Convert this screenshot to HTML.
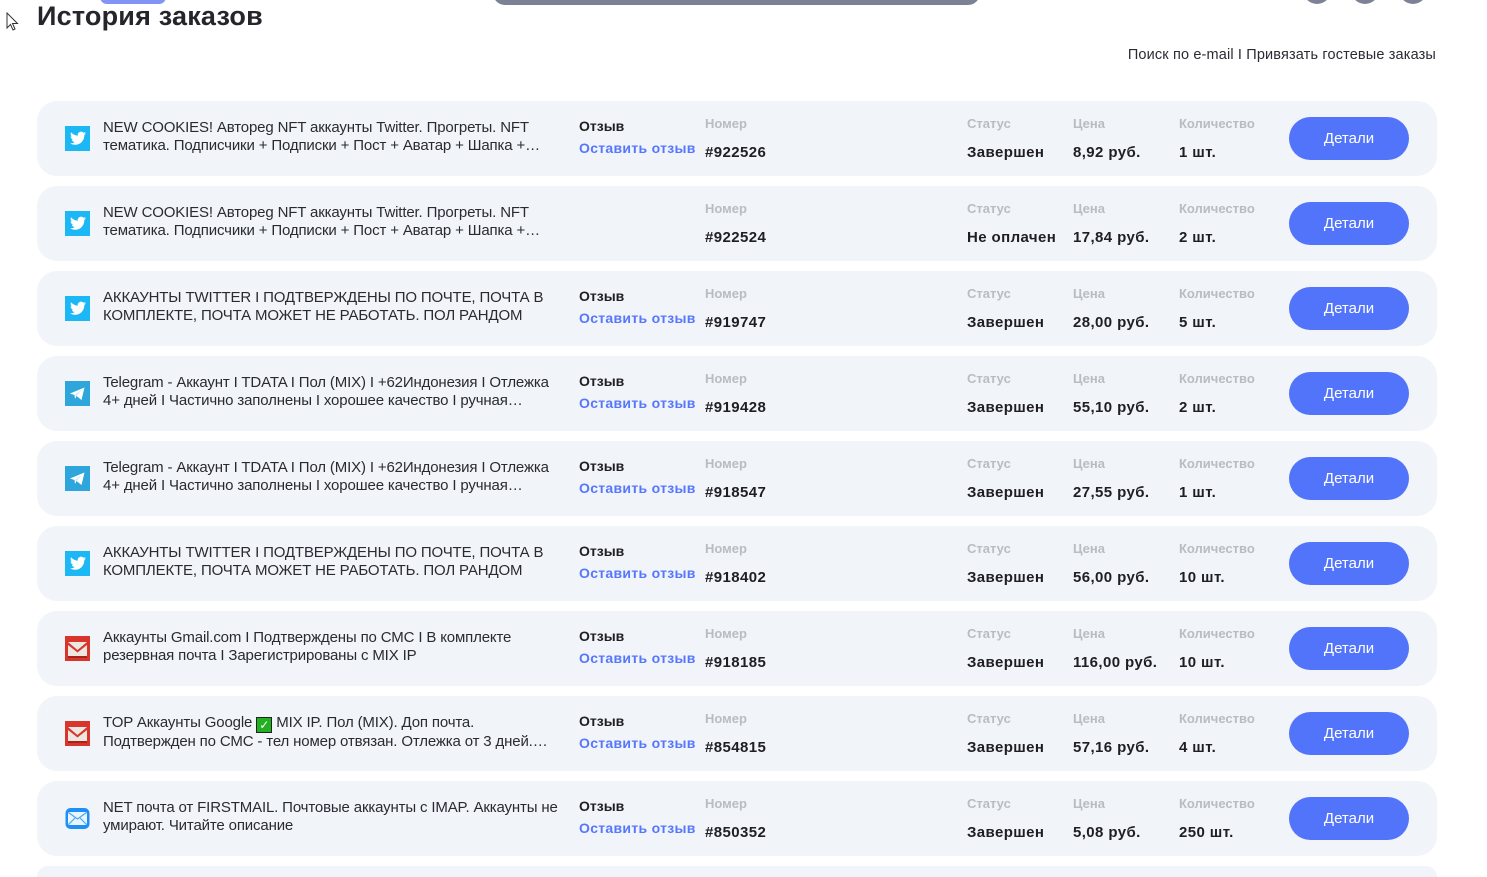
<!DOCTYPE html>
<html style="width:1487px;height:877px;overflow:hidden"><head><meta charset="utf-8">
<style>
*{margin:0;padding:0;box-sizing:border-box}
body{width:1487px;height:877px;overflow:hidden;background:#fff;font-family:"Liberation Sans","DejaVu Sans",sans-serif;color:#1e1e24;position:relative}
.abs{position:absolute}
h1{position:absolute;left:37px;top:0px;font-size:27px;font-weight:bold;color:#25252b;letter-spacing:0.2px;line-height:32px}
.links{position:absolute;right:51px;top:47px;font-size:14.5px;color:#2b2b33;letter-spacing:0.15px}
.row{position:absolute;left:37px;width:1400px;height:75px;background:#f1f4f9;border-radius:20px}
.ic{position:absolute;left:28px;top:25px;width:25px;height:25px}
.title{position:absolute;left:66px;top:18px;width:458px;font-size:15px;line-height:18px;color:#2a2a33;display:-webkit-box;-webkit-line-clamp:2;-webkit-box-orient:vertical;overflow:hidden;letter-spacing:-0.15px}
.ot{position:absolute;left:542px;top:17px;font-size:14px;font-weight:bold;color:#1e1e24}
.ot2{position:absolute;left:542px;top:39px;font-size:14px;font-weight:bold;color:#5677fc;letter-spacing:0.3px}
.lab{position:absolute;top:15px;font-size:13px;font-weight:bold;color:#b9bcc3}
.val{position:absolute;top:43px;font-size:15px;font-weight:bold;color:#1e1e24;letter-spacing:0.4px}
.btn{position:absolute;left:1252px;top:16px;width:120px;height:43px;border-radius:22px;background:#5274fb;color:#fff;font-size:15px;text-align:center;line-height:43px}
</style></head><body>
<div class="abs" style="left:100px;top:-10px;width:66px;height:14px;border-radius:8px;background:#8294f5"></div>
<div class="abs" style="left:493px;top:-20px;width:487px;height:25px;border-radius:12px;background:#7b8295"></div>
<div class="abs" style="left:1303px;top:-24px;width:28px;height:28px;border-radius:50%;background:#7b8295"></div>
<div class="abs" style="left:1351px;top:-24px;width:28px;height:28px;border-radius:50%;background:#7b8295"></div>
<div class="abs" style="left:1399px;top:-24px;width:28px;height:28px;border-radius:50%;background:#7b8295"></div>
<svg class="abs" style="left:6px;top:12px" width="14" height="20" viewBox="0 0 14 20"><path d="M1 1 L1 16 L4.5 12.5 L7 18 L9 17 L6.5 11.5 L11.5 11.5 Z" fill="#fff" stroke="#333" stroke-width="1"/></svg>
<h1>История заказов</h1>
<div class="links">Поиск по e-mail I Привязать гостевые заказы</div>

<svg width="0" height="0" style="position:absolute"><defs>
<symbol id="tw" viewBox="0 0 25 25"><rect width="25" height="25" fill="#1cb7f5"/><path d="M21 7.2c-.6.3-1.2.4-1.9.5.7-.4 1.2-1 1.4-1.8-.6.4-1.3.6-2.1.8a3.3 3.3 0 0 0-5.6 3C10.1 9.600 7.700 8.300 6.100 6.300c-.9 1.500-.4 3.400 1 4.400-.5 0-1-.2-1.500-.4 0 1.600 1.100 3 2.600 3.300-.5.100-1 .200-1.500.100.400 1.300 1.700 2.300 3.100 2.300A6.600 6.600 0 0 1 5 17.300c1.500.900 3.200 1.500 5 1.500 6.100 0 9.500-5.100 9.300-9.800.7-.5 1.200-1.100 1.700-1.800z" fill="#fff"/></symbol>
<symbol id="tg" viewBox="0 0 25 25"><rect width="25" height="25" fill="#2ea6dc"/><path d="M5 12.5 L19.5 6.5 L16.5 19 L11.5 15 L10 18 L9.5 14 Z" fill="#fff"/><path d="M9.5 14 L17 8.5 L11.5 15 Z" fill="#d3e9f5"/></symbol>
<symbol id="gm" viewBox="0 0 25 25"><rect width="25" height="25" fill="#d8362d"/><rect x="3" y="6" width="19" height="14" fill="#ece8e1"/><path d="M3 6 L12.5 14 L22 6 L22 9 L12.5 16.5 L3 9Z" fill="#d8362d"/><path d="M3 20 L22 20 L22 22 L3 22Z" fill="#a8221c"/></symbol>
<symbol id="em" viewBox="0 0 25 25"><rect x="0.5" y="2" width="24" height="21" rx="5" fill="#1e8ff5"/><rect x="3" y="6" width="19" height="13" rx="1.5" fill="#e9f5ff"/><path d="M3.5 6.5 L12.5 13 L21.5 6.5 M3.5 18.5 L10 12 M21.5 18.5 L15 12" stroke="#4aa8f5" stroke-width="1.2" fill="none"/></symbol>
</defs></svg>

<div class="row" style="top:101px"><svg class="ic"><use href="#tw"/></svg><div class="title">NEW COOKIES! Автореg NFT аккаунты Twitter. Прогреты. NFT тематика. Подписчики + Подписки + Пост + Аватар + Шапка + Описание</div><div class="ot">Отзыв</div><div class="ot2">Оставить отзыв</div><div class="lab" style="left:668px">Номер</div><div class="val" style="left:668px">#922526</div><div class="lab" style="left:930px">Статус</div><div class="val" style="left:930px">Завершен</div><div class="lab" style="left:1036px">Цена</div><div class="val" style="left:1036px">8,92 руб.</div><div class="lab" style="left:1142px">Количество</div><div class="val" style="left:1142px">1 шт.</div><div class="btn">Детали</div></div>

<div class="row" style="top:186px"><svg class="ic"><use href="#tw"/></svg><div class="title">NEW COOKIES! Автореg NFT аккаунты Twitter. Прогреты. NFT тематика. Подписчики + Подписки + Пост + Аватар + Шапка + Описание</div><div class="lab" style="left:668px">Номер</div><div class="val" style="left:668px">#922524</div><div class="lab" style="left:930px">Статус</div><div class="val" style="left:930px">Не оплачен</div><div class="lab" style="left:1036px">Цена</div><div class="val" style="left:1036px">17,84 руб.</div><div class="lab" style="left:1142px">Количество</div><div class="val" style="left:1142px">2 шт.</div><div class="btn">Детали</div></div>

<div class="row" style="top:271px"><svg class="ic"><use href="#tw"/></svg><div class="title">АККАУНТЫ TWITTER I ПОДТВЕРЖДЕНЫ ПО ПОЧТЕ, ПОЧТА В КОМПЛЕКТЕ, ПОЧТА МОЖЕТ НЕ РАБОТАТЬ. ПОЛ РАНДОМ</div><div class="ot">Отзыв</div><div class="ot2">Оставить отзыв</div><div class="lab" style="left:668px">Номер</div><div class="val" style="left:668px">#919747</div><div class="lab" style="left:930px">Статус</div><div class="val" style="left:930px">Завершен</div><div class="lab" style="left:1036px">Цена</div><div class="val" style="left:1036px">28,00 руб.</div><div class="lab" style="left:1142px">Количество</div><div class="val" style="left:1142px">5 шт.</div><div class="btn">Детали</div></div>

<div class="row" style="top:356px"><svg class="ic"><use href="#tg"/></svg><div class="title">Telegram - Аккаунт I TDATA I Пол (MIX) I +62Индонезия I Отлежка 4+ дней I Частично заполнены I хорошее качество I ручная регистрация</div><div class="ot">Отзыв</div><div class="ot2">Оставить отзыв</div><div class="lab" style="left:668px">Номер</div><div class="val" style="left:668px">#919428</div><div class="lab" style="left:930px">Статус</div><div class="val" style="left:930px">Завершен</div><div class="lab" style="left:1036px">Цена</div><div class="val" style="left:1036px">55,10 руб.</div><div class="lab" style="left:1142px">Количество</div><div class="val" style="left:1142px">2 шт.</div><div class="btn">Детали</div></div>

<div class="row" style="top:441px"><svg class="ic"><use href="#tg"/></svg><div class="title">Telegram - Аккаунт I TDATA I Пол (MIX) I +62Индонезия I Отлежка 4+ дней I Частично заполнены I хорошее качество I ручная регистрация</div><div class="ot">Отзыв</div><div class="ot2">Оставить отзыв</div><div class="lab" style="left:668px">Номер</div><div class="val" style="left:668px">#918547</div><div class="lab" style="left:930px">Статус</div><div class="val" style="left:930px">Завершен</div><div class="lab" style="left:1036px">Цена</div><div class="val" style="left:1036px">27,55 руб.</div><div class="lab" style="left:1142px">Количество</div><div class="val" style="left:1142px">1 шт.</div><div class="btn">Детали</div></div>

<div class="row" style="top:526px"><svg class="ic"><use href="#tw"/></svg><div class="title">АККАУНТЫ TWITTER I ПОДТВЕРЖДЕНЫ ПО ПОЧТЕ, ПОЧТА В КОМПЛЕКТЕ, ПОЧТА МОЖЕТ НЕ РАБОТАТЬ. ПОЛ РАНДОМ</div><div class="ot">Отзыв</div><div class="ot2">Оставить отзыв</div><div class="lab" style="left:668px">Номер</div><div class="val" style="left:668px">#918402</div><div class="lab" style="left:930px">Статус</div><div class="val" style="left:930px">Завершен</div><div class="lab" style="left:1036px">Цена</div><div class="val" style="left:1036px">56,00 руб.</div><div class="lab" style="left:1142px">Количество</div><div class="val" style="left:1142px">10 шт.</div><div class="btn">Детали</div></div>

<div class="row" style="top:611px"><svg class="ic"><use href="#gm"/></svg><div class="title">Аккаунты Gmail.com I Подтверждены по СМС I В комплекте резервная почта I Зарегистрированы с MIX IP</div><div class="ot">Отзыв</div><div class="ot2">Оставить отзыв</div><div class="lab" style="left:668px">Номер</div><div class="val" style="left:668px">#918185</div><div class="lab" style="left:930px">Статус</div><div class="val" style="left:930px">Завершен</div><div class="lab" style="left:1036px">Цена</div><div class="val" style="left:1036px">116,00 руб.</div><div class="lab" style="left:1142px">Количество</div><div class="val" style="left:1142px">10 шт.</div><div class="btn">Детали</div></div>

<div class="row" style="top:696px"><svg class="ic"><use href="#gm"/></svg><div class="title">TOP Аккаунты Google <span style="display:inline-block;width:16px;height:16px;background:#22b022;border:1px solid #222;color:#fff;font-size:12px;line-height:14px;text-align:center;vertical-align:-2px">✓</span> MIX IP. Пол (MIX). Доп почта. Подтвержден по СМС - тел номер отвязан. Отлежка от 3 дней. Описание</div><div class="ot">Отзыв</div><div class="ot2">Оставить отзыв</div><div class="lab" style="left:668px">Номер</div><div class="val" style="left:668px">#854815</div><div class="lab" style="left:930px">Статус</div><div class="val" style="left:930px">Завершен</div><div class="lab" style="left:1036px">Цена</div><div class="val" style="left:1036px">57,16 руб.</div><div class="lab" style="left:1142px">Количество</div><div class="val" style="left:1142px">4 шт.</div><div class="btn">Детали</div></div>

<div class="row" style="top:781px"><svg class="ic"><use href="#em"/></svg><div class="title">NET почта от FIRSTMAIL. Почтовые аккаунты с IMAP. Аккаунты не умирают. Читайте описание</div><div class="ot">Отзыв</div><div class="ot2">Оставить отзыв</div><div class="lab" style="left:668px">Номер</div><div class="val" style="left:668px">#850352</div><div class="lab" style="left:930px">Статус</div><div class="val" style="left:930px">Завершен</div><div class="lab" style="left:1036px">Цена</div><div class="val" style="left:1036px">5,08 руб.</div><div class="lab" style="left:1142px">Количество</div><div class="val" style="left:1142px">250 шт.</div><div class="btn">Детали</div></div>

<div class="row" style="top:866px;height:11px;border-radius:20px 20px 0 0"></div>
</body></html>
